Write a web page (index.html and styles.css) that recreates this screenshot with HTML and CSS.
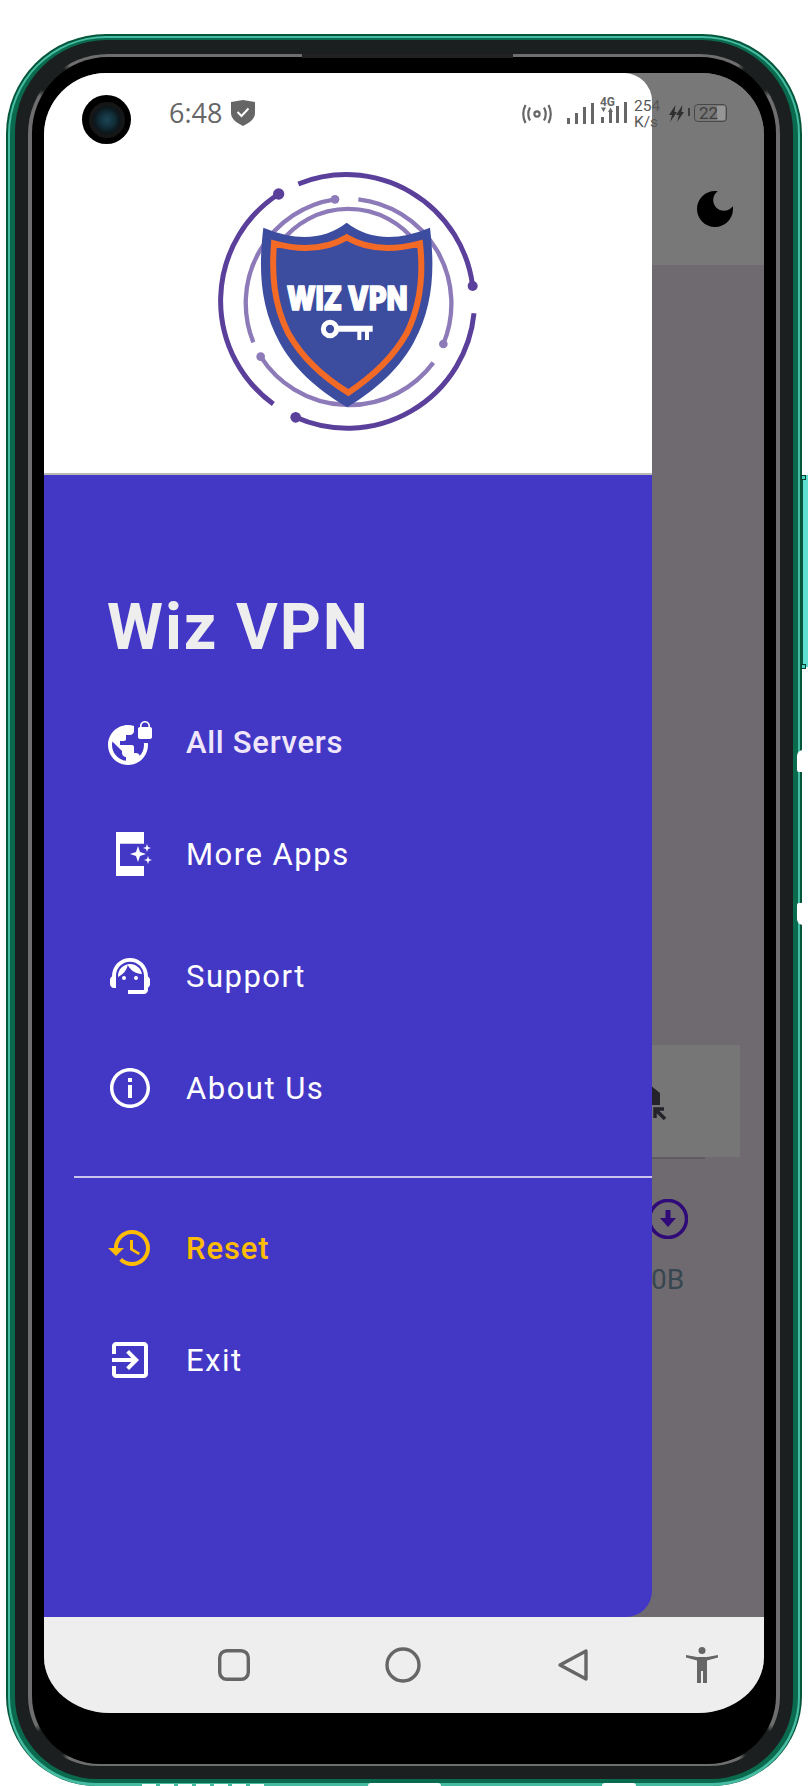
FILE: index.html
```html
<!DOCTYPE html>
<html lang="en">
<head>
    <meta charset="UTF-8">
    <meta name="viewport" content="width=device-width, initial-scale=1.0">
    <title>Wiz VPN</title>
    <link rel="stylesheet" href="styles.css">
</head>
<body>
    <div class="phone">
        <div class="frame-teal">
            <div class="frame-green">
                <div class="frame-dark">
                    <div class="frame-line">
                        <div class="frame-black">
                            <div class="screen">
                                <!-- the app page behind the drawer -->
                                <div class="app">
                                    <div class="app-bar">
                                        <svg class="moon" viewBox="0 0 24 24"><path d="M12 3c-4.97 0-9 4.03-9 9s4.03 9 9 9 9-4.03 9-9c0-.46-.04-.92-.1-1.36-.98 1.37-2.58 2.26-4.4 2.26-2.98 0-5.4-2.42-5.4-5.4 0-1.81.89-3.42 2.26-4.4-.44-.06-.9-.1-1.36-.1z"/></svg>
                                    </div>
                                    <div class="app-body">
                                        <div class="bg-card">
                                            <svg class="bg-card-icon" viewBox="0 0 40 40">
                                                <path class="fill-dark" d="M20 4L30 12V24H10V12Z"/>
                                                <path class="arrow-dark" d="M35 38L27 30M25 37V28H34"/>
                                            </svg>
                                        </div>
                                        <div class="bg-card-shadow"></div>
                                        <div class="bg-stat">
                                            <svg class="bg-stat-icon" viewBox="0 0 40 40">
                                                <circle cx="20" cy="20" r="18.5"/>
                                                <path d="M17.5 11h5v8h5.5L20 28l-8-9h5.5z"/>
                                            </svg>
                                            <span class="bg-stat-value">0B</span>
                                        </div>
                                    </div>
                                </div>

                                <!-- navigation drawer -->
                                <div class="drawer">
                                    <div class="drawer-header">
                                        <svg class="logo" viewBox="0 0 900 840">
                                            <g class="ring-outer">
                                                <path d="M295 72A382 382 0 0 1 818 378"/>
                                                <path d="M236 102A382 382 0 0 0 220 732"/>
                                                <path d="M287 772A382 382 0 0 0 822 460"/>
                                            </g>
                                            <circle class="dot-outer" cx="818" cy="378" r="15"/>
                                            <circle class="dot-outer" cx="236" cy="102" r="17"/>
                                            <circle class="dot-outer" cx="287" cy="772" r="16"/>
                                            <g class="ring-inner">
                                                <path d="M160 547A315 315 0 0 1 405 118"/>
                                                <path d="M475 118A315 315 0 0 1 730 552"/>
                                                <path d="M182 590A315 315 0 0 0 700 608"/>
                                                <path d="M240 250A255 255 0 0 1 650 250"/>
                                            </g>
                                            <circle class="dot-inner" cx="405" cy="118" r="13"/>
                                            <circle class="dot-inner" cx="730" cy="552" r="13"/>
                                            <circle class="dot-inner" cx="182" cy="590" r="13"/>
                                            <path class="shield" d="M190 203Q340 265 440 188Q540 265 690 203C705 330 700 440 640 550C590 640 510 700 442 742C370 700 290 640 240 550C180 440 175 330 190 203Z"/>
                                            <path class="shield-edge" d="M222 250Q350 285 440 232Q530 285 660 250C670 340 665 430 620 520C575 600 510 655 445 698C375 655 310 600 265 520C220 430 215 340 222 250Z"/>
                                            <text class="logo-text" x="260" y="449" textLength="362" lengthAdjust="spacingAndGlyphs">WIZ VPN</text>
                                            <circle class="key-ring" cx="390" cy="507" r="20"/>
                                            <path class="key-blade" d="M412 497H518V515H507V540H495V515H484V540H472V515H412Z"/>
                                        </svg>
                                    </div>
                                    <div class="drawer-body">
                                        <h1 class="drawer-title">Wiz VPN</h1>
                                        <div class="drawer-row row-active">
                                            <svg class="row-icon" viewBox="0 0 24 24"><path d="M22 4v-.5C22 2.12 20.88 1 19.5 1S17 2.12 17 3.5V4c-.55 0-1 .45-1 1v4c0 .55.45 1 1 1h5c.55 0 1-.45 1-1V5c0-.55-.45-1-1-1zm-.8 0h-3.4v-.5c0-.94.76-1.7 1.7-1.7s1.7.76 1.7 1.7V4zm-2.28 8c.04.33.08.66.08 1 0 2.08-.8 3.97-2.1 5.39-.26-.81-1-1.39-1.9-1.39h-1v-3c0-.55-.45-1-1-1H7v-2h2c.55 0 1-.45 1-1V8h2c1.1 0 2-.9 2-2V3.46c-.95-.3-1.95-.46-3-.46C5.48 3 1 7.48 1 13s4.48 10 10 10 10-4.48 10-10c0-.34-.02-.67-.05-1h-2.03zM10 20.93c-3.95-.49-7-3.85-7-7.93 0-.62.08-1.21.21-1.79L8 16v1c0 1.1.9 2 2 2v1.93z"/></svg>
                                            <span>All Servers</span>
                                        </div>
                                        <div class="drawer-row">
                                            <svg class="row-icon" viewBox="0 0 48 48">
                                                <path d="M10 2H38V13.7H14V36H38V46H10Z"/>
                                                <path d="M32 16L34 22L40 24L34 26L32 32L30 26L24 24L30 22Z"/>
                                                <path d="M41 14L42 17L45 18L42 19L41 22L40 19L37 18L40 17Z"/>
                                                <path d="M42 26L43 29L46 30L43 31L42 34L41 31L38 30L41 29Z"/>
                                            </svg>
                                            <span>More Apps</span>
                                        </div>
                                        <div class="drawer-row row-support">
                                            <svg class="row-icon" viewBox="0 0 24 24">
                                                <path d="M21 12.22C21 6.73 16.74 3 12 3c-4.69 0-9 3.65-9 9.28-.6.34-1 .98-1 1.72v2c0 1.1.9 2 2 2h1v-6.1c0-3.87 3.13-7 7-7s7 3.13 7 7V19h-8v2h8c1.1 0 2-.9 2-2v-1.22c.59-.31 1-.92 1-1.61v-2.3c0-.67-.41-1.28-1-1.65z"/>
                                                <circle cx="9" cy="13" r="1"/>
                                                <circle cx="15" cy="13" r="1"/>
                                                <path d="M18 11.03C17.52 8.18 15.04 6 12.05 6c-3.03 0-6.29 2.51-6.03 6.45 2.47-1.01 4.33-3.21 4.86-5.89 1.31 2.63 4 4.44 7.12 4.47z"/>
                                            </svg>
                                            <span>Support</span>
                                        </div>
                                        <div class="drawer-row">
                                            <svg class="row-icon" viewBox="0 0 24 24">
                                                <path fill-rule="evenodd" d="M12 2c-5.52 0-10 4.48-10 10s4.48 10 10 10 10-4.48 10-10S17.52 2 12 2zm0 18.300c-4.580 0-8.300-3.720-8.300-8.300s3.720-8.300 8.300-8.300 8.300 3.720 8.300 8.300-3.720 8.300-8.300 8.300z"/>
                                                <path d="M11 7h2v2h-2zm0 3.500h2V17h-2z"/>
                                            </svg>
                                            <span>About Us</span>
                                        </div>
                                        <div class="drawer-divider"></div>
                                        <div class="drawer-row row-reset">
                                            <svg class="row-icon" viewBox="0 0 24 24"><path d="M13 3c-4.97 0-9 4.03-9 9H1l3.89 3.89.07.14L9 12H6c0-3.87 3.13-7 7-7s7 3.13 7 7-3.13 7-7 7c-1.93 0-3.68-.79-4.94-2.06l-1.42 1.42C8.27 19.99 10.51 21 13 21c4.97 0 9-4.03 9-9s-4.03-9-9-9zm-1 5v5l4.28 2.54.72-1.21-3.5-2.08V8H12z"/></svg>
                                            <span>Reset</span>
                                        </div>
                                        <div class="drawer-row">
                                            <svg class="row-icon" viewBox="0 0 24 24"><path d="M10.09 15.59L11.5 17l5-5-5-5-1.41 1.41L12.67 11H3v2h9.67l-2.58 2.59zM19 3H5c-1.11 0-2 .9-2 2v4h2V5h14v14H5v-4H3v4c0 1.1.89 2 2 2h14c1.1 0 2-.9 2-2V5c0-1.1-.9-2-2-2z"/></svg>
                                            <span>Exit</span>
                                        </div>
                                    </div>
                                </div>

                                <!-- status bar sits over drawer and page -->
                                <div class="status-bar">
                                    <span class="status-time">6:48</span>
                                    <svg class="status-shield" viewBox="0 0 24 26">
                                        <path class="fill-status" d="M0 2L12 0L24 2V13C24 19 18 23 12 26C6 23 0 19 0 13Z"/>
                                        <path class="check" d="M6.500 12L10.500 16L17.500 8.500"/>
                                    </svg>
                                    <div class="status-right">
                                        <svg class="status-hotspot" viewBox="0 0 30 20">
                                            <circle cx="15" cy="10" r="2.600"/>
                                            <path d="M8 3.500Q4.500 10 8 16.500M22 3.500Q25.500 10 22 16.500M3.500 1Q-1 10 3.500 19M26.500 1Q31 10 26.500 19"/>
                                        </svg>
                                        <svg class="status-signal" viewBox="0 0 27 21">
                                            <rect x="0" y="15" width="3" height="6"/>
                                            <rect x="8" y="10" width="3" height="11"/>
                                            <rect x="16" y="4" width="3" height="17"/>
                                            <rect x="24" y="0" width="3" height="21"/>
                                        </svg>
                                        <svg class="status-net" viewBox="0 -6 27 32">
                                            <text class="status-net-label" x="0" y="9" textLength="15" lengthAdjust="spacingAndGlyphs">4G</text>
                                            <path d="M1 10.500h5L3.500 15zM8 15h5L10.500 10.500z"/>
                                            <rect x="1" y="20" width="3" height="6"/>
                                            <rect x="9" y="15" width="3" height="11"/>
                                            <rect x="16" y="9" width="3" height="17"/>
                                            <rect x="24" y="5" width="3" height="21"/>
                                        </svg>
                                        <div class="status-speed">
                                            <span>254</span>
                                            <span>K/s</span>
                                        </div>
                                        <svg class="status-bolt" viewBox="0 0 15 17">
                                            <path d="M6.500 0L0 10H3L1 17L8 7H5.500ZM13.500 0L7 10H10L8 17L15 7H12.500Z"/>
                                        </svg>
                                        <span class="battery-nub"></span>
                                        <div class="battery">
                                            <span class="battery-level"></span>
                                            <span class="battery-text">22</span>
                                        </div>
                                    </div>
                                </div>

                                <div class="camera"><span class="camera-lens"></span></div>

                                <div class="nav-bar">
                                    <svg class="nav-square" viewBox="0 0 32 32"><rect x="1.700" y="1.700" width="28.600" height="28.600" rx="7"/></svg>
                                    <svg class="nav-circle" viewBox="0 0 36 36"><circle cx="18" cy="18" r="16"/></svg>
                                    <svg class="nav-back" viewBox="0 0 32 34"><path d="M3 17L29 3V31Z"/></svg>
                                    <svg class="nav-person" viewBox="0 0 32 36">
                                        <circle cx="16" cy="3.500" r="3.500"/>
                                        <path d="M0 8L11 10H21L32 8V10.500L21 13.500V36H17V24H15V36H11V13.500L0 10.500Z"/>
                                    </svg>
                                </div>
                            </div>
                        </div>
                    </div>
                </div>
                <span class="speaker"></span>
            </div>
        </div>
        <span class="side-key"></span>
        <span class="side-rivet rivet-top"></span>
        <span class="side-rivet rivet-bottom"></span>
        <span class="side-notch notch-top"></span>
        <span class="side-notch notch-bottom"></span>
        <span class="bottom-notch notch-a"></span>
        <span class="bottom-notch notch-b"></span>
        <span class="bottom-holes"></span>
    </div>
</body>
</html>
```

FILE: styles.css
```css
* {
    box-sizing: border-box;
}
html, body {
    margin: 0;
    height: 100%;
    overflow: hidden;
    background-color: #fff;
}
body {
    font-family: Roboto, "Liberation Sans", sans-serif;
    padding: 34px 0 0 6px;
}

/* phone frame */
.phone {
    position: relative;
    width: 796px;
    height: 1752px;
    padding: 2px 2px 0;
    border-radius: 100px 100px 90px 90px;
    background-color: #03563a;
}
.frame-teal {
    height: 100%;
    padding: 2px 2px 3px;
    border-radius: 98px 98px 88px 88px;
    background-color: #45bba2;
}
.frame-green {
    position: relative;
    height: 100%;
    padding: 2px 5px 4px;
    border-radius: 96px 96px 86px 86px;
    background-color: #0a6a4e;
}
.frame-dark {
    height: 100%;
    padding: 14px 13px 13px;
    border-radius: 92px 92px 82px 82px;
    background-color: #1c1f1f;
}
.frame-line {
    height: 100%;
    padding: 3px 4px 2px;
    border-radius: 80px 80px 70px 70px;
    /* the bright edge fades out around the corners */
    background:
        radial-gradient(circle 24px at 20px 20px, #1c1f1f 70%, transparent),
        radial-gradient(circle 24px at calc(100% - 20px) 20px, #1c1f1f 70%, transparent),
        radial-gradient(circle 24px at 20px calc(100% - 20px), #1c1f1f 70%, transparent),
        radial-gradient(circle 24px at calc(100% - 20px) calc(100% - 20px), #1c1f1f 70%, transparent),
        #6e6e6e;
}
.frame-black {
    height: 100%;
    padding: 16px 12px 47px;
    border-radius: 76px 76px 68px 68px;
    background-color: #000;
}
.speaker {
    position: absolute;
    left: 292px;
    top: 16px;
    width: 211px;
    height: 4px;
    background-color: #222;
}

/* screen */
.screen {
    position: relative;
    display: flex;
    flex-direction: column;
    width: 720px;
    height: 1640px;
    overflow: hidden;
    border-radius: 62px 62px 66px 66px / 62px 62px 56px 56px;
    background-color: #6f6a70;
}
.app {
    flex: 1;
}
.app-bar {
    display: flex;
    justify-content: flex-end;
    align-items: center;
    height: 192px;
    padding: 80px 25px 0 0;
    background-color: #787878;
}
.moon {
    width: 48px;
    height: 48px;
    fill: #000;
}
.app-body {
    padding-top: 780px;
}
.bg-card {
    display: flex;
    justify-content: center;
    align-items: center;
    width: 180px;
    height: 112px;
    margin-left: 516px;
    background-color: #767676;
}
.bg-card-icon {
    width: 40px;
    height: 40px;
}
.fill-dark {
    fill: #24232b;
}
.arrow-dark {
    fill: none;
    stroke: #24232b;
    stroke-width: 3.500;
}
.bg-card-shadow {
    width: 145px;
    height: 2px;
    margin-left: 516px;
    background-color: #5f5b60;
}
.bg-stat {
    display: flex;
    flex-direction: column;
    align-items: center;
    width: 40px;
    margin: 40px 0 0 604px;
}
.bg-stat-icon {
    width: 40px;
    height: 40px;
}
.bg-stat-icon circle {
    fill: none;
    stroke: #2f0a78;
    stroke-width: 3.500;
}
.bg-stat-icon path {
    fill: #2f0a78;
}
.bg-stat-value {
    margin: 26px 0 0 -1px;
    font-size: 28px;
    line-height: 30px;
    color: #37474f;
}

/* drawer */
.drawer {
    position: absolute;
    top: 0;
    left: 0;
    bottom: 96px;
    display: flex;
    flex-direction: column;
    width: 608px;
    overflow: hidden;
    border-radius: 0 28px 26px 0;
}
.drawer-header {
    height: 402px;
    padding: 87px 0 0 156px;
    border-bottom: 2px solid #b9b9b9;
    background-color: #fff;
}
.logo {
    display: block;
    width: 300px;
    height: 280px;
}
.ring-outer path {
    fill: none;
    stroke: #5b409b;
    stroke-width: 15;
}
.dot-outer {
    fill: #5b409b;
}
.ring-inner path {
    fill: none;
    stroke: #8d7bb9;
    stroke-width: 13;
}
.dot-inner {
    fill: #8d7bb9;
}
.shield {
    fill: #3c4da0;
}
.shield-edge {
    fill: none;
    stroke: #f26a25;
    stroke-width: 18;
}
.logo-text {
    font-family: Inter, Roboto, sans-serif;
    font-size: 100px;
    font-weight: 900;
    fill: #fff;
    stroke: #fff;
    stroke-width: 4;
}
.key-ring {
    fill: none;
    stroke: #fff;
    stroke-width: 15;
}
.key-blade {
    fill: #fff;
}
.drawer-body {
    flex: 1;
    padding: 118px 0 0 62px;
    background-color: #4338c6;
    color: #fff;
}
.drawer-title {
    margin: 0 0 56px 1px;
    font-size: 64px;
    line-height: 70px;
    font-weight: 700;
    letter-spacing: 1.900px;
    color: #eee;
}
.drawer-row {
    display: flex;
    align-items: center;
    gap: 32px;
    height: 48px;
    margin-bottom: 64px;
    font-size: 31px;
    letter-spacing: 1.500px;
}
.row-icon {
    flex-shrink: 0;
    width: 48px;
    height: 48px;
    fill: currentColor;
}
.row-active {
    margin-bottom: 63px;
    font-weight: 500;
    letter-spacing: 0.700px;
    color: #efe6fb;
}
.row-active .row-icon {
    fill: #fff;
}
.row-active span {
    margin-bottom: 2px;
}
.row-support {
    margin-top: 74px;
}
.row-reset {
    font-weight: 500;
    letter-spacing: 0.900px;
    color: #ffbc05;
}
.drawer-divider {
    height: 2px;
    margin: 1px 0 46px -32px;
    background-color: #c9c3ee;
}

/* status bar */
.status-bar {
    position: absolute;
    top: 0;
    left: 0;
    right: 0;
    display: flex;
    align-items: flex-start;
    height: 70px;
    padding: 0 37px 0 125px;
    color: #666;
}
.status-time {
    margin-top: 24px;
    font-family: "Open Sans", sans-serif;
    font-size: 27px;
    font-weight: 500;
    line-height: 32px;
}
.status-shield {
    width: 24px;
    height: 26px;
    margin: 27px 0 0 9px;
}
.fill-status {
    fill: #666;
}
.check {
    fill: none;
    stroke: #fff;
    stroke-width: 2;
}
.status-right {
    display: flex;
    align-items: flex-start;
    margin-left: auto;
}
.status-hotspot {
    width: 30px;
    height: 20px;
    margin-top: 31px;
}
.status-hotspot circle,
.status-hotspot path {
    fill: none;
    stroke: #666;
    stroke-width: 2.200;
}
.status-signal {
    width: 27px;
    height: 21px;
    margin: 30px 0 0 15px;
    fill: #666;
}
.status-net {
    width: 27px;
    height: 32px;
    margin: 18px 0 0 6px;
    fill: #666;
}
.status-net-label {
    font-size: 12px;
    font-weight: 700;
}
.status-speed {
    display: flex;
    flex-direction: column;
    width: 27px;
    margin: 25px 0 0 7px;
    font-size: 15.500px;
    line-height: 16px;
    color: #585858;
}
.status-bolt {
    width: 15px;
    height: 17px;
    margin: 32px 0 0 8px;
    fill: #2f2f2f;
}
.battery-nub {
    width: 2px;
    height: 8px;
    margin: 35px 0 0 4px;
    background-color: #3c3c3c;
}
.battery {
    position: relative;
    display: flex;
    justify-content: center;
    align-items: center;
    width: 33px;
    height: 18px;
    margin: 31px 0 0 4px;
    border: 1.500px solid #484848;
    border-radius: 4px;
    font-size: 17px;
    color: #3f3f3f;
}
.battery-level {
    position: absolute;
    top: 1px;
    bottom: 1px;
    right: 1px;
    width: 8px;
    background-color: #969696;
}
.battery-text {
    position: relative;
    margin-right: 4px;
}
.camera {
    position: absolute;
    top: 22px;
    left: 38px;
    display: flex;
    justify-content: center;
    align-items: center;
    width: 49px;
    height: 49px;
    border-radius: 50%;
    background-color: #000;
}
.camera-lens {
    width: 36px;
    height: 36px;
    border-radius: 50%;
    background: radial-gradient(circle, #1c4555 0, #12303c 28%, #0c171c 50%, #161616 62%);
}

/* nav bar */
.nav-bar {
    display: flex;
    align-items: center;
    flex-shrink: 0;
    height: 96px;
    padding-left: 174px;
    background-color: #eee;
}
.nav-square {
    width: 32px;
    height: 32px;
}
.nav-circle {
    width: 36px;
    height: 36px;
    margin-left: 135px;
}
.nav-back {
    width: 32px;
    height: 34px;
    margin-left: 136px;
}
.nav-person {
    width: 32px;
    height: 36px;
    margin-left: 97px;
    fill: #666;
}
.nav-square rect,
.nav-circle circle,
.nav-back path {
    fill: none;
    stroke: #666;
    stroke-width: 3.400;
    stroke-linejoin: round;
}

/* side buttons and cut-outs on the frame edge */
.side-key {
    position: absolute;
    top: 441px;
    left: 796px;
    width: 6px;
    height: 192px;
    border-left: 1px solid #0a5a41;
    background-color: #5fe0d0;
}
.side-rivet {
    position: absolute;
    left: 795px;
    width: 5px;
    height: 5px;
    border: 1px solid #053d2d;
    background-color: #45d6c6;
}
.rivet-top {
    top: 441px;
}
.rivet-bottom {
    top: 630px;
}
.side-notch {
    position: absolute;
    left: 791px;
    width: 6px;
    height: 22px;
    background-color: #fff;
}
.notch-top {
    top: 716px;
    border-radius: 6px 0 0 2px;
}
.notch-bottom {
    top: 869px;
    border-radius: 2px 0 0 6px;
}
.bottom-notch {
    position: absolute;
    bottom: 0;
    height: 3px;
    border-radius: 8px 8px 0 0;
    background-color: #fff;
}
.notch-a {
    left: 362px;
    width: 73px;
}
.notch-b {
    left: 596px;
    width: 34px;
}
.bottom-holes {
    position: absolute;
    bottom: 0;
    left: 136px;
    width: 126px;
    height: 2px;
    background: repeating-linear-gradient(90deg, #fff 0, #fff 14px, transparent 14px, transparent 18px);
}
```
